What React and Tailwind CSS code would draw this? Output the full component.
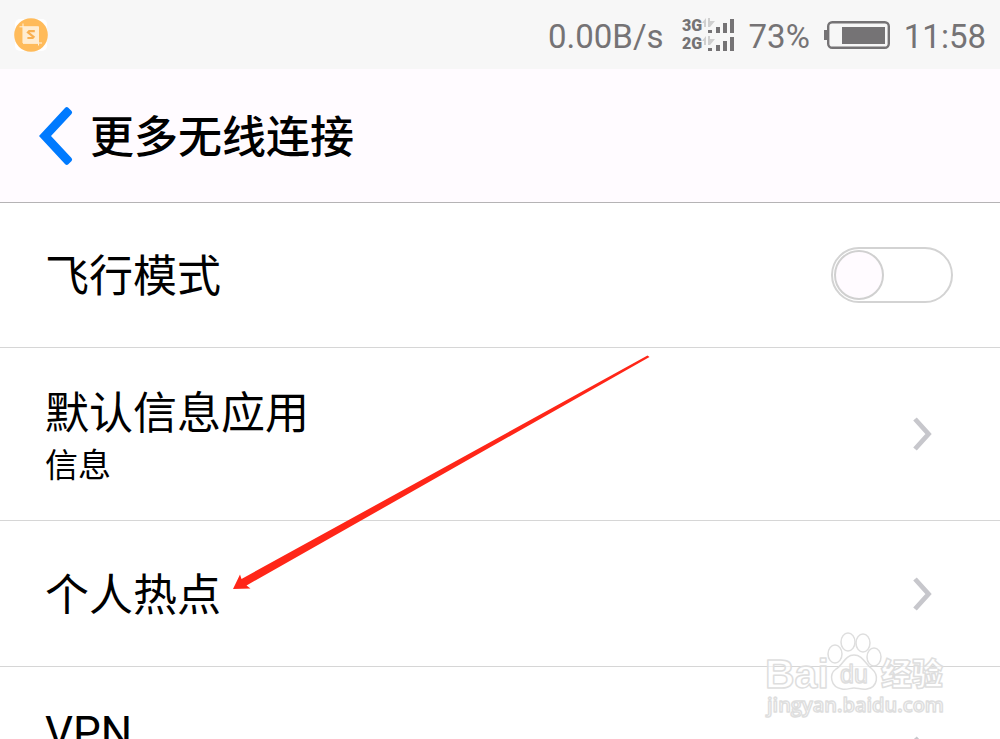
import React, { useState } from "react";

const AppBadge = () => (
  <svg viewBox="0 0 34 34" className="h-[34px] w-[34px]" aria-hidden="true">
    <rect x="1" y="1" width="32" height="32" rx="5" fill="#ffffff" />
    <circle cx="17" cy="17" r="16.8" fill="#ffbb5a" />
    <path d="M9 5.5v19.5M5.5 8.8h19v18.7M9 25h19" stroke="#fff3df" strokeWidth="1" fill="none" />
    <rect x="9" y="8.8" width="16" height="17" fill="#ffedd2" />
    <path
      d="M20.8 13.2h-5.6l-1.2 1.2 5.6 4.4-1 1.2h-5.2"
      stroke="#f9b052"
      strokeWidth="2.2"
      fill="none"
    />
  </svg>
);

const SignalBars = ({ label }) => (
  <svg viewBox="0 0 53 18" className="h-[18px] w-[53px]" role="img" aria-label={label}>
    <text
      x="0"
      y="14"
      fontFamily="Roboto, sans-serif"
      fontWeight="900"
      fontSize="16"
      fill="#757375"
    >
      {label}
    </text>
    <path d="M20 6l4-5v9h-2v-4zM26 1h2v3h5l-5 6h-2z" fill="#cfcfcf" />
    <g fill="#757375">
      <rect x="26" y="13" width="4" height="3" />
      <rect x="34" y="10" width="4" height="6" />
      <rect x="41" y="6" width="4" height="10" />
      <rect x="48" y="2" width="4" height="14" />
    </g>
  </svg>
);

const Battery = () => (
  <svg viewBox="0 0 66 28" className="h-7 w-[66px]" role="img" aria-label="73%">
    <rect x="0" y="9" width="4" height="10" fill="#757375" />
    <rect x="4.2" y="1.2" width="60.6" height="25.6" rx="4" fill="none" stroke="#757375" strokeWidth="2.4" />
    <rect x="18" y="6" width="43" height="17" fill="#757375" />
  </svg>
);

const BackIcon = () => (
  <svg viewBox="0 0 34 60" className="h-[60px] w-[34px]" aria-hidden="true">
    <path
      d="M26.2 1.7Q27.8 .3 29.3 1.7L32.6 5.1Q33.8 6.6 32.5 8L12 30 32.5 52Q33.8 53.4 32.6 54.9L29.3 58.2Q27.8 59.6 26.2 58.2L0 30z"
      fill="#007aff"
    />
  </svg>
);

const Chevron = () => (
  <svg viewBox="0 0 19 34" className="h-[34px] w-[19px] shrink-0" aria-hidden="true">
    <path d="M2 2l13.5 15L2 32" fill="none" stroke="#c7c7cc" strokeWidth="4.8" />
  </svg>
);

const StatusBar = () => (
  <div className="flex h-[69px] items-center justify-between bg-[#f7f7f7] pr-[14px] pl-[14px] text-[33px] leading-10 text-[#757375]">
    <AppBadge />
    <div className="flex items-center pt-1">
      <span>0.00B/s</span>
      <div className="mr-[14px] mb-1 ml-[18px] flex flex-col">
        <SignalBars label="3G" />
        <SignalBars label="2G" />
      </div>
      <span>73%</span>
      <div className="mr-[14px] mb-1 ml-[14px]">
        <Battery />
      </div>
      <span>11:58</span>
    </div>
  </div>
);

const LinkRow = ({ title, detail, tall }) => (
  <button
    type="button"
    className={`flex w-full items-center justify-between border-b border-[#d6d6d6] pr-[68px] pl-[45px] text-left ${
      tall ? "h-[173px]" : "h-[146px]"
    }`}
  >
    <span className="flex flex-col pt-1">
      <span className="text-[44px] leading-[60px]">{title}</span>
      {tall && <span className="h-11 text-[33px] leading-[44px]">{detail}</span>}
    </span>
    <Chevron />
  </button>
);

const SwitchRow = ({ title }) => {
  const [on, setOn] = useState(false);

  return (
    <label className="flex h-[145px] items-center justify-between border-b border-[#d6d6d6] pr-[47px] pl-[45px]">
      <span className="pt-1 text-[44px] leading-[60px]">{title}</span>
      <input
        type="checkbox"
        role="switch"
        checked={on}
        onChange={(e) => setOn(e.target.checked)}
        className="h-14 w-[122px] appearance-none rounded-full border-2 border-[#d3d3d3] bg-white p-px before:block before:h-[50px] before:w-[50px] before:rounded-full before:border-2 before:border-[#d0d0d0] before:bg-[#fffbff] checked:bg-[#4cd964] checked:before:ml-auto"
      />
    </label>
  );
};

const PointerArrow = () => (
  <svg
    viewBox="0 0 418 236"
    className="pointer-events-none absolute top-[151px] left-[232px] h-[236px] w-[418px]"
    aria-hidden="true"
  >
    <path d="M1 235L8 220.5l1.5 4.5L415.5 1.5l2 1.5L14.5 231.5l4 3z" fill="#ff2618" />
  </svg>
);

const Watermark = () => (
  <svg
    viewBox="0 0 190 94"
    className="pointer-events-none absolute top-[425px] right-[50px] h-[94px] w-[190px]"
    aria-hidden="true"
  >
    <g
      fill="#ffffff"
      fillOpacity="0.6"
      stroke="#dedede"
      strokeWidth="1.5"
      strokeLinejoin="round"
    >
      <text
        x="5"
        y="60"
        fontSize="41"
        fontFamily="'Liberation Sans', sans-serif"
        fontWeight="700"
      >
        Bai
      </text>
      <text
        x="7"
        y="84"
        fontSize="20"
        fontFamily="'Open Sans', sans-serif"
        fontWeight="600"
      >
        jingyan.baidu.com
      </text>
      <ellipse cx="75" cy="26" rx="7" ry="9" />
      <ellipse cx="88" cy="14" rx="7" ry="9" />
      <ellipse cx="103" cy="15" rx="7" ry="9" />
      <ellipse cx="114" cy="29" rx="7" ry="9" />
      <path d="M94 27C85 27 83 37 76 41C69 46 70 59 82 61C87 62 90 60 94 60C98 60 102 62 107 61C118 59 119 47 112 41C105 36 103 27 94 27z" />
      <text
        x="80"
        y="55"
        fontSize="25"
        fontFamily="'Liberation Sans', sans-serif"
        fontWeight="400"
      >
        du
      </text>
      <text
        x="121"
        y="57"
        fontSize="31"
        fontFamily="'Noto Sans CJK SC', sans-serif"
        fontWeight="900"
      >
        经验
      </text>
    </g>
  </svg>
);

const App = () => {
  return (
    <div className="h-screen overflow-hidden bg-white font-['Roboto','Noto_Sans_CJK_SC',sans-serif] text-black">
      <StatusBar />

      {/* Title bar */}
      <header className="flex h-[134px] items-center gap-[17px] border-b border-[#b5b3b5] bg-[#fffbff] pl-[39px]">
        <button type="button" aria-label="返回">
          <BackIcon />
        </button>
        <h1 className="pt-1 text-[44px] leading-[60px] font-medium">更多无线连接</h1>
      </header>

      {/* Settings list */}
      <main className="relative">
        <SwitchRow title="飞行模式" />
        <LinkRow title="默认信息应用" detail="信息" tall />
        <LinkRow title="个人热点" />
        <LinkRow title="VPN" tall />
        <PointerArrow />
        <Watermark />
      </main>
    </div>
  );
};

export default App;
